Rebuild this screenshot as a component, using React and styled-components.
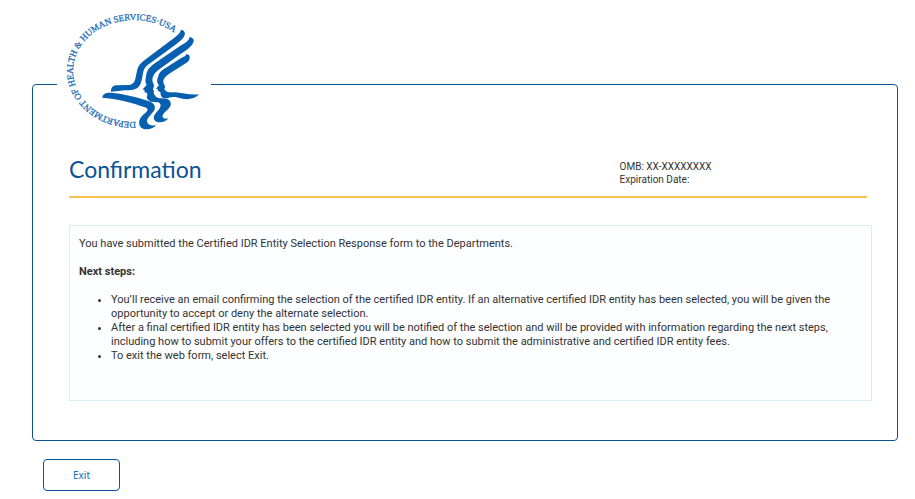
import React from "react";
import styled, { createGlobalStyle } from "styled-components";

const GlobalStyle = createGlobalStyle`
  * { box-sizing: border-box; }
  body {
    margin: 0;
    background: #fff;
    color: #333;
    font: 11px/14px Roboto, sans-serif;
  }
`;

const Page = styled.main`
  padding: 84px 17px 8px 32px;
`;

const Card = styled.section`
  border: 1px solid #0b5394;
  border-radius: 4px;
  padding: 0 25px 39px 36px;
`;

const Logo = styled.svg`
  display: block;
  width: 154px;
  height: 133px;
  margin: -80px 0 0 -12px;
  background: #fff;
`;

const SealText = styled.text`
  font: 9px "Liberation Serif", serif;
  fill: #1f6eb6;
  stroke: #1f6eb6;
  stroke-width: 0.3;
`;

const Header = styled.header`
  display: grid;
  grid-template-columns: 69% 1fr;
  align-items: start;
  margin: 15px 5px 0 0;
  padding-bottom: 10px;
  border-bottom: 2px solid #fcc050;
`;

const Title = styled.h1`
  margin: 0;
  color: #0b5394;
  font: 23px/32px Lato, sans-serif;
`;

const FormInfo = styled.p`
  margin: 7px 0 0;
  font: 10px/13px Roboto, sans-serif;
`;

const Line = styled.span`
  display: block;
`;

const Panel = styled.div`
  min-height: 176px;
  margin-top: 27px;
  padding: 11px 9px;
  border: 1px solid #d5edf5;
  background: #fcfeff;
`;

const Message = styled.p`
  margin: 0 0 14px;
`;

const StepsTitle = styled.h2`
  margin: 0 0 14px;
  font-size: 11px;
  font-weight: 700;
`;

const Steps = styled.ul`
  margin: 0;
  padding: 0 0 0 32px;
`;

const ExitButton = styled.button`
  display: block;
  width: 77px;
  height: 32px;
  margin: 18px 0 0 11px;
  border: 1px solid #0b5394;
  border-radius: 4px;
  background: #fff;
  color: #0b70b8;
  font: 10px/14px "Noto Sans", sans-serif;
  cursor: pointer;
`;

function HhsLogo() {
  return (
    <Logo viewBox="57 5 154 133" role="img" aria-label="Department of Health and Human Services USA">
      <defs>
        <path id="seal-ring" d="M136 122 A61 51 0 0 1 73 71 A61 51 0 0 1 134 20 A61 51 0 0 1 195 71" />
      </defs>
      <SealText>
        <textPath href="#seal-ring">DEPARTMENT OF HEALTH &amp; HUMAN SERVICES·USA</textPath>
      </SealText>
      <g fill="#075fb0" transform="translate(95 20) scale(.33333)">
        <path d="M258 29 C270 31 273 41 266 51 C262 60 240 75 225 86 L158 135 C148 143 146 150 143 165 C140 185 137 196 127 204 C118 211 105 211 90 211 L48 215 C48 203 53 196 65 196 L100 195 C112 194 118 188 121 176 L127 148 C131 135 138 128 150 119 L225 63 C243 49 255 42 258 29Z" />
        <path d="M284 51 C298 54 300 64 290 76 C280 88 262 99 245 110 L190 150 C178 159 172 168 172 180 C172 188 178 193 177 199 L174 207 L177 214 L176 219 C180 230 186 234 198 235 L213 236 C224 238 229 246 227 256 C222 270 206 277 203 286 C201 295 208 298 220 295 C212 307 190 311 180 302 C170 291 182 280 192 268 C200 258 198 249 188 247 L168 245 C157 240 153 234 157 226 L156 219 L148 216 L149 211 L143 208 L155 195 C150 188 151 178 153 168 C156 150 163 143 175 133 L255 78 C272 68 282 62 284 51Z" />
        <path d="M274 102 C287 104 287 116 278 126 L225 160 C210 170 205 177 205 186 C205 192 211 196 210 202 L208 207 C213 216 220 218 238 217 C262 218 285 226 312 223 C300 236 280 240 262 236 C243 230 232 229 219 234 C208 238 198 232 197 224 L196 216 L188 212 L189 208 L183 206 L192 195 C184 188 186 178 190 168 C194 155 202 150 215 142 L255 116 C267 109 272 110 274 102Z" />
        <path d="M22 233 C24 219 38 217 55 219 C90 223 130 232 160 243 C178 249 183 260 178 270 C172 282 158 290 156 303 C157 314 168 318 183 316 C172 330 145 332 136 320 C127 305 137 290 150 280 C160 272 160 266 150 262 C120 250 60 235 22 233Z" />
      </g>
    </Logo>
  );
}

const steps = [
  "You’ll receive an email confirming the selection of the certified IDR entity. If an alternative certified IDR entity has been selected, you will be given the opportunity to accept or deny the alternate selection.",
  "After a final certified IDR entity has been selected you will be notified of the selection and will be provided with information regarding the next steps, including how to submit your offers to the certified IDR entity and how to submit the administrative and certified IDR entity fees.",
  "To exit the web form, select Exit.",
];

export default function App() {
  return (
    <>
      <GlobalStyle />
      <Page>
        <Card>
          <HhsLogo />
          <Header>
            <Title>Confirmation</Title>
            <FormInfo>
              <Line>OMB: XX-XXXXXXXX</Line>
              <Line>Expiration Date:</Line>
            </FormInfo>
          </Header>
          <Panel>
            <Message>
              You have submitted the Certified IDR Entity Selection Response form to the Departments.
            </Message>
            <StepsTitle>Next steps:</StepsTitle>
            <Steps>
              {steps.map((step) => (
                <li key={step}>{step}</li>
              ))}
            </Steps>
          </Panel>
        </Card>
        <ExitButton type="button">Exit</ExitButton>
      </Page>
    </>
  );
}
